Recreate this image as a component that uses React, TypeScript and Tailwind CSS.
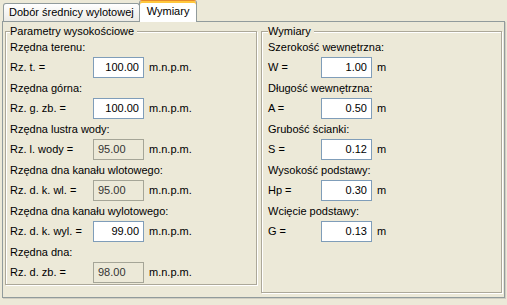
import React from "react";

type Row = { title: string; label: string; value: string; readOnly?: boolean };

const heightRows: Row[] = [
  { title: "Rzędna terenu:", label: "Rz. t. =", value: "100.00" },
  { title: "Rzędna górna:", label: "Rz. g. zb. =", value: "100.00" },
  { title: "Rzędna lustra wody:", label: "Rz. l. wody =", value: "95.00", readOnly: true },
  { title: "Rzędna dna kanału wlotowego:", label: "Rz. d. k. wl. =", value: "95.00", readOnly: true },
  { title: "Rzędna dna kanału wylotowego:", label: "Rz. d. k. wyl. =", value: "99.00" },
  { title: "Rzędna dna:", label: "Rz. d. zb. =", value: "98.00", readOnly: true },
];

const sizeRows: Row[] = [
  { title: "Szerokość wewnętrzna:", label: "W =", value: "1.00" },
  { title: "Długość wewnętrzna:", label: "A =", value: "0.50" },
  { title: "Grubość ścianki:", label: "S =", value: "0.12" },
  { title: "Wysokość podstawy:", label: "Hp =", value: "0.30" },
  { title: "Wcięcie podstawy:", label: "G =", value: "0.13" },
];

function Edit({ value, readOnly }: { value: string; readOnly?: boolean }) {
  return (
    <div
      className={
        readOnly
          ? "flex h-[21px] w-[51px] items-center border border-[#A5A597] bg-[#ECE9D8] pl-[4px] text-[#333]"
          : "flex h-[21px] w-[51px] items-center justify-end border border-[#7F9DB9] bg-white pr-[4px]"
      }
    >
      {value}
    </div>
  );
}

function Group({
  title,
  rows,
  unit,
  labelW,
  className,
}: {
  title: string;
  rows: Row[];
  unit: string;
  labelW: string;
  className: string;
}) {
  return (
    <fieldset
      className={
        "border border-[#ACA899] shadow-[inset_1px_1px_0_#fff,1px_1px_0_#fff] " +
        className
      }
    >
      <legend className="bg-[#ECE9D8] pr-[3px] leading-[12px]">{title}</legend>
      {rows.map((r) => (
        <div key={r.title}>
          <div className="flex h-[20px] items-center">{r.title}</div>
          <div className="flex h-[21px] items-center">
            <span className={labelW}>{r.label}</span>
            <Edit value={r.value} readOnly={r.readOnly} />
            <span className="ml-[5px]">{unit}</span>
          </div>
        </div>
      ))}
    </fieldset>
  );
}

export default function App() {
  return (
    <div className="h-[305px] w-[507px] bg-[#ECE9D8] pl-[2px] font-['Tahoma','Liberation_Sans',sans-serif] text-[11px] text-black">
      {/* tabs */}
      <div className="flex h-[21px] items-end pl-[1px]">
        <div className="flex h-[18px] items-center rounded-t-[3px] border border-b-0 border-[#919B9C] bg-gradient-to-b from-white to-[#ECEBE6] px-[5px]">
          Dobór średnicy wylotowej
        </div>
        <div className="relative z-10 -mb-px -ml-px flex h-[22px] items-center rounded-t-[3px] border-x border-t border-[#919B9C] border-t-[#E68B2C] bg-white px-[7px] pb-[1px] shadow-[inset_0_2px_0_#FFC73C]">
          Wymiary
        </div>
      </div>
      <div className="flex h-[277px] w-[503px] gap-[4px] border border-[#919B9C] bg-[#ECE9D8] pl-[2px] pt-[3px] shadow-[1px_1px_0_#D0CEC2]">
        <Group
          title="Parametry wysokościowe"
          rows={heightRows}
          unit="m.n.p.m."
          labelW="w-[83px]"
          className="h-[260px] w-[252px] pl-[4px]"
        />
        <Group
          title="Wymiary"
          rows={sizeRows}
          unit="m"
          labelW="w-[53px]"
          className="h-[268px] w-[241px] pl-[6px]"
        />
      </div>
    </div>
  );
}
